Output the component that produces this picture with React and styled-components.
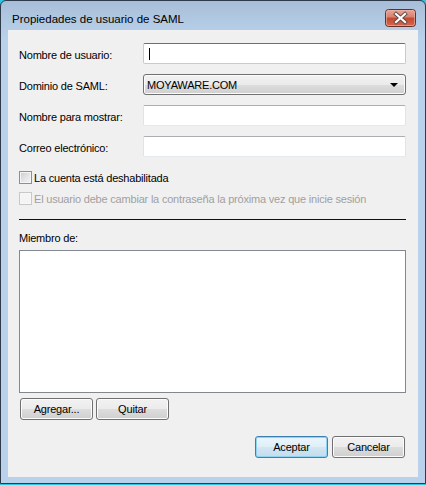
import styled, { createGlobalStyle } from "styled-components";

const GlobalStyle = createGlobalStyle`
  html, body {
    margin: 0;
    padding: 0;
    background: #2ec6de;
  }
  body {
    font-family: "Liberation Sans", Arial, sans-serif;
    font-size: 11px;
    letter-spacing: -0.2px;
    color: #000;
  }
`;

const Window = styled.div`
  box-sizing: border-box;
  width: 426px;
  height: 484px;
  border: 1px solid #2f3b4a;
  border-radius: 6px 6px 0 0;
  background: linear-gradient(#a7bdd9 0px, #b4cbe5 24px, #b9d1ea 40px, #b9d1ea 100%);
  display: flex;
  flex-direction: column;
`;

const TitleBar = styled.div`
  height: 29px;
  display: flex;
  justify-content: space-between;
  align-items: flex-start;
  padding: 0 9px 0 11px;
`;

const Title = styled.span`
  margin-top: 11px;
  font-size: 11.5px;
  letter-spacing: 0;
  line-height: 15px;
  color: #000;
`;

const CloseButton = styled.div`
  margin-top: 8px;
  width: 31px;
  height: 18px;
  display: flex;
`;

const Client = styled.div`
  flex: 1;
  margin: 0 7px 6px;
  background: #f0f0f0;
  padding: 13px 12px 19px 11px;
  display: flex;
  flex-direction: column;
`;

const Form = styled.div`
  display: grid;
  grid-template-columns: 124px 1fr;
  grid-auto-rows: 21px;
  row-gap: 10px;
  align-items: center;
`;

const Label = styled.span`
  padding-top: 2px;
`;

const TextBox = styled.div`
  box-sizing: border-box;
  height: 21px;
  background: #fff;
  border: 1px solid;
  border-radius: 2px;
  border-color: ${(p) =>
    p.$focused ? "#3d7bad #b5cfe7 #b5cfe7 #b5cfe7" : "#abadb3 #e2e3ea #e3e9ef #e2e3ea"};
  display: flex;
  align-items: center;
  padding-left: 5px;
`;

const Caret = styled.span`
  width: 1px;
  height: 12px;
  background: #000;
`;

const buttonFace = `
  box-sizing: border-box;
  height: 22px;
  border: 1px solid #707070;
  border-radius: 3px;
  background: linear-gradient(#f2f2f2 0%, #ebebeb 50%, #dddddd 51%, #cfcfcf 100%);
  box-shadow: inset 0 0 0 1px #fcfcfc;
  font-family: "Liberation Sans", Arial, sans-serif;
  font-size: 11px;
  color: #000;
`;

const Combo = styled.div`
  ${buttonFace}
  height: 21px;
  display: flex;
  align-items: center;
  justify-content: space-between;
  padding: 0 7px 0 3px;
`;

const Arrow = styled.span`
  width: 0;
  height: 0;
  border-left: 4px solid transparent;
  border-right: 4px solid transparent;
  border-top: 4px solid #000;
`;

const Checks = styled.div`
  margin-top: 14px;
  display: flex;
  flex-direction: column;
  gap: 8px;
`;

const CheckRow = styled.div`
  display: flex;
  align-items: center;
  gap: 2px;
  height: 13px;
  color: ${(p) => (p.$disabled ? "#a0a0a0" : "#000")};
`;

const CheckBox = styled.span`
  box-sizing: border-box;
  width: 13px;
  height: 13px;
  border: 1px solid ${(p) => (p.$disabled ? "#c8c8c8" : "#8e8f8f")};
  background: ${(p) =>
    p.$disabled
      ? "#f4f4f4"
      : "linear-gradient(135deg, #c9ccd1 0%, #e2e3e6 50%, #f5f5f5 100%)"};
  box-shadow: inset 0 0 0 1px ${(p) => (p.$disabled ? "#f7f7f7" : "#f4f4f4")};
`;

const Separator = styled.div`
  margin-top: 14px;
  height: 1px;
  background: #101010;
`;

const SectionLabel = styled.div`
  margin-top: 12px;
  line-height: 13px;
`;

const ListBox = styled.div`
  box-sizing: border-box;
  margin-top: 5px;
  height: 143px;
  background: #fff;
  border: 1px solid #828790;
`;

const ButtonRow = styled.div`
  display: flex;
  gap: ${(p) => p.$gap}px;
  justify-content: ${(p) => (p.$end ? "flex-end" : "flex-start")};
  margin-top: ${(p) => (p.$end ? "auto" : "5px")};
  padding-left: ${(p) => (p.$end ? 0 : 1)}px;
  padding-right: ${(p) => (p.$end ? 1 : 0)}px;
`;

const Button = styled.div`
  ${buttonFace}
  width: 73px;
  display: flex;
  align-items: center;
  justify-content: center;
  ${(p) =>
    p.$default &&
    `
    border-color: #3c7fb1;
    box-shadow: inset 0 0 0 1px #8fd3f3;
    background: linear-gradient(#eaf6fd 0%, #e0eef7 50%, #d2e6f3 51%, #c5dcec 100%);
  `}
`;

function CloseIcon() {
  return (
    <svg width="31" height="18" viewBox="0 0 31 18">
      <defs>
        <linearGradient id="closeFace" x1="0" y1="0" x2="0" y2="1">
          <stop offset="0" stopColor="#e9a899" />
          <stop offset="0.45" stopColor="#d6806f" />
          <stop offset="0.5" stopColor="#c4472f" />
          <stop offset="1" stopColor="#d36b52" />
        </linearGradient>
      </defs>
      <rect x="0.5" y="0.5" width="30" height="17" rx="3" fill="url(#closeFace)" stroke="#6b2e25" />
      <rect x="1.5" y="1.5" width="28" height="15" rx="2" fill="none" stroke="#f0b8aa" strokeOpacity="0.6" />
      <path d="M11 5 L20 13 M20 5 L11 13" stroke="#5b4a48" strokeWidth="4" strokeLinecap="square" />
      <path d="M11 5 L20 13 M20 5 L11 13" stroke="#fff" strokeWidth="2.2" strokeLinecap="square" />
    </svg>
  );
}

export default function App() {
  return (
    <>
      <GlobalStyle />
      <Window>
        <TitleBar>
          <Title>Propiedades de usuario de SAML</Title>
          <CloseButton>
            <CloseIcon />
          </CloseButton>
        </TitleBar>
        <Client>
          <Form>
            <Label>Nombre de usuario:</Label>
            <TextBox $focused>
              <Caret />
            </TextBox>
            <Label>Dominio de SAML:</Label>
            <Combo>
              <span>MOYAWARE.COM</span>
              <Arrow />
            </Combo>
            <Label>Nombre para mostrar:</Label>
            <TextBox />
            <Label>Correo electrónico:</Label>
            <TextBox />
          </Form>
          <Checks>
            <CheckRow>
              <CheckBox />
              <span>La cuenta está deshabilitada</span>
            </CheckRow>
            <CheckRow $disabled>
              <CheckBox $disabled />
              <span>El usuario debe cambiar la contraseña la próxima vez que inicie sesión</span>
            </CheckRow>
          </Checks>
          <Separator />
          <SectionLabel>Miembro de:</SectionLabel>
          <ListBox />
          <ButtonRow $gap={3}>
            <Button>Agregar...</Button>
            <Button>Quitar</Button>
          </ButtonRow>
          <ButtonRow $end $gap={4}>
            <Button $default>Aceptar</Button>
            <Button>Cancelar</Button>
          </ButtonRow>
        </Client>
      </Window>
    </>
  );
}
